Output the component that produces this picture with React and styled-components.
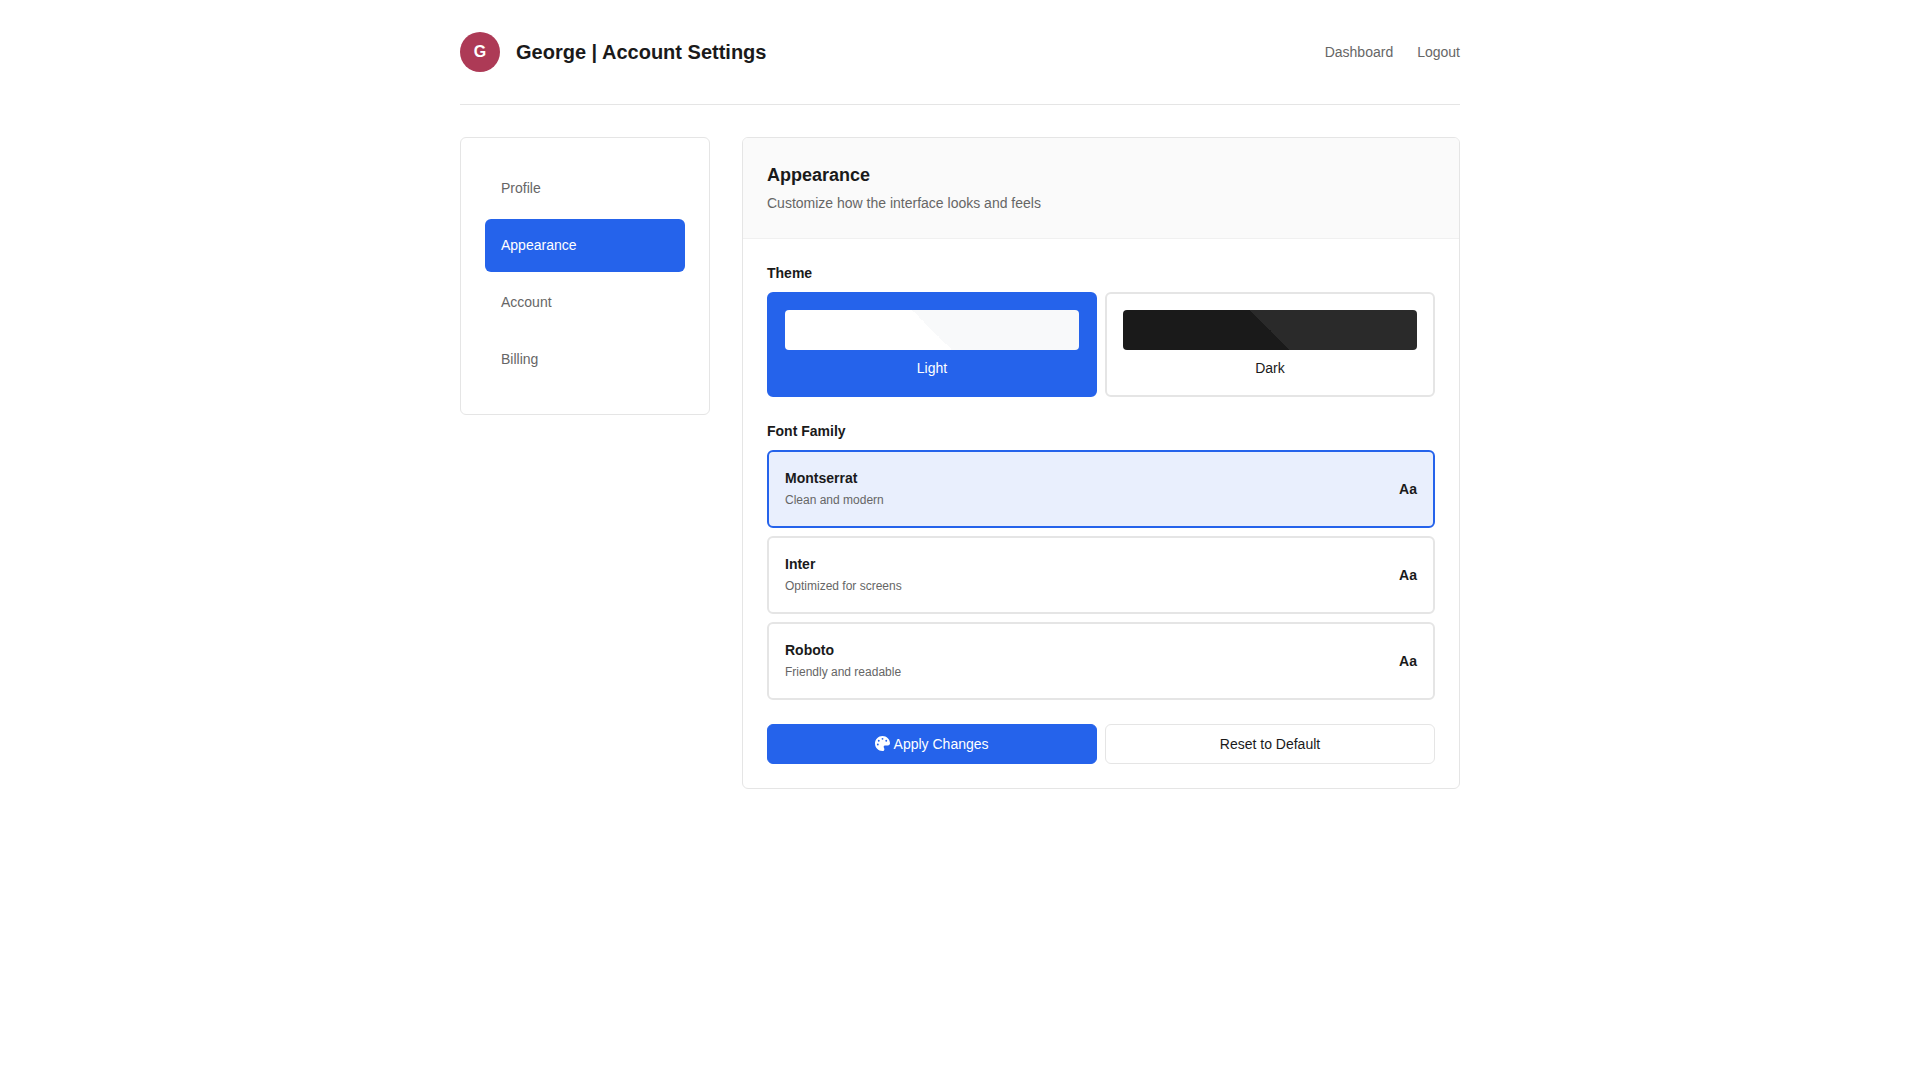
import React, { useState } from "react";
import styled, { createGlobalStyle, css } from "styled-components";
import { FaPalette } from "react-icons/fa6";

const GlobalStyle = createGlobalStyle`
  *, *::before, *::after { box-sizing: border-box; margin: 0; padding: 0; }
  body {
    background: #fff;
    color: #1a1a1a;
    font-family: "Liberation Sans", Arial, sans-serif;
    font-size: 14px;
    line-height: 1.5;
  }
`;

const Container = styled.div`
  width: 1001px;
  margin: 0 auto;
  padding: 32px 0 32px 1px;
`;

const Header = styled.header`
  display: flex;
  align-items: center;
  justify-content: space-between;
  padding-bottom: 32px;
  margin-bottom: 32px;
  border-bottom: 1px solid #e5e5e5;
`;

const Brand = styled.div`
  display: flex;
  align-items: center;
  gap: 16px;
`;

const Avatar = styled.div`
  display: flex;
  align-items: center;
  justify-content: center;
  width: 40px;
  height: 40px;
  border-radius: 50%;
  background: #ad3a56;
  color: #fff;
  font-size: 16px;
  font-weight: 600;
`;

const PageTitle = styled.h1`
  font-size: 20px;
  font-weight: 600;
`;

const TopNav = styled.nav`
  display: flex;
  gap: 24px;
`;

const TopLink = styled.a`
  color: #666;
  text-decoration: none;
  cursor: pointer;
`;

const Layout = styled.div`
  display: grid;
  grid-template-columns: 250px 1fr;
  gap: 32px;
  align-items: start;
`;

const Sidebar = styled.aside`
  padding: 24px;
  border: 1px solid #e5e5e5;
  border-radius: 6px;
`;

const SideList = styled.ul`
  list-style: none;
`;

const SideItem = styled.li`
  margin-bottom: 4px;
`;

const SideLink = styled.a`
  display: block;
  padding: 16px;
  border-radius: 6px;
  cursor: pointer;
  color: ${(p) => (p.$active ? "#fff" : "#666")};
  background: ${(p) => (p.$active ? "#2563eb" : "transparent")};
`;

const Panel = styled.main`
  border: 1px solid #e5e5e5;
  border-radius: 6px;
  overflow: hidden;
`;

const PanelHeader = styled.div`
  padding: 24px;
  background: #fafafa;
  border-bottom: 1px solid #f0f0f0;
`;

const PanelTitle = styled.h2`
  margin-bottom: 4px;
  font-size: 18px;
  font-weight: 600;
`;

const PanelText = styled.p`
  color: #666;
`;

const PanelBody = styled.div`
  padding: 24px;
`;

const Section = styled.section`
  margin-bottom: 24px;
`;

const Label = styled.h3`
  margin-bottom: 8px;
  font-size: 14px;
  font-weight: 600;
`;

const TwoColumns = styled.div`
  display: grid;
  grid-template-columns: 1fr 1fr;
  gap: 8px;
`;

const optionFrame = css`
  padding: 16px;
  border: 2px solid ${(p) => (p.$active ? "#2563eb" : "#e5e5e5")};
  border-radius: 6px;
  cursor: pointer;
`;

const ThemeCard = styled.div`
  ${optionFrame}
  text-align: center;
  color: ${(p) => (p.$active ? "#fff" : "#1a1a1a")};
  background: ${(p) => (p.$active ? "#2563eb" : "transparent")};
`;

const Swatch = styled.div`
  height: 40px;
  margin-bottom: 8px;
  border-radius: 4px;
  background: linear-gradient(45deg, ${(p) => p.$from} 50%, ${(p) => p.$to} 50%);
`;

const FontList = styled.div`
  display: grid;
  gap: 8px;
`;

const FontCard = styled.div`
  ${optionFrame}
  display: flex;
  align-items: center;
  justify-content: space-between;
  height: 78px;
  background: ${(p) => (p.$active ? "#e9effd" : "transparent")};
`;

const FontName = styled.div`
  margin-bottom: 2px;
  font-weight: 600;
`;

const FontNote = styled.div`
  padding-bottom: 1px;
  color: #666;
  font-size: 12px;
`;

const Sample = styled.span`
  font-weight: 600;
`;

const Button = styled.button`
  height: 40px;
  border: 1px solid ${(p) => (p.$primary ? "#2563eb" : "#e5e5e5")};
  border-radius: 6px;
  background: ${(p) => (p.$primary ? "#2563eb" : "transparent")};
  color: ${(p) => (p.$primary ? "#fff" : "#1a1a1a")};
  font: inherit;
  cursor: pointer;
`;

const PaletteIcon = styled(FaPalette)`
  width: 15px;
  height: 15px;
  vertical-align: -2px;
`;

const tabs = ["Profile", "Appearance", "Account", "Billing"];

const themes = [
  { name: "Light", from: "#ffffff", to: "#f8f9fa" },
  { name: "Dark", from: "#1a1a1a", to: "#2a2a2a" },
];

const fonts = [
  { name: "Montserrat", note: "Clean and modern" },
  { name: "Inter", note: "Optimized for screens" },
  { name: "Roboto", note: "Friendly and readable" },
];

export default function App() {
  const [tab, setTab] = useState("Appearance");
  const [theme, setTheme] = useState("Light");
  const [font, setFont] = useState("Montserrat");

  const reset = () => {
    setTheme("Light");
    setFont("Montserrat");
  };

  return (
    <>
      <GlobalStyle />
      <Container>
        <Header>
          <Brand>
            <Avatar>G</Avatar>
            <PageTitle>George | Account Settings</PageTitle>
          </Brand>
          <TopNav>
            <TopLink>Dashboard</TopLink>
            <TopLink>Logout</TopLink>
          </TopNav>
        </Header>
        <Layout>
          <Sidebar>
            <SideList>
              {tabs.map((name) => (
                <SideItem key={name}>
                  <SideLink $active={tab === name} onClick={() => setTab(name)}>
                    {name}
                  </SideLink>
                </SideItem>
              ))}
            </SideList>
          </Sidebar>
          <Panel>
            <PanelHeader>
              <PanelTitle>Appearance</PanelTitle>
              <PanelText>Customize how the interface looks and feels</PanelText>
            </PanelHeader>
            <PanelBody>
              <Section>
                <Label>Theme</Label>
                <TwoColumns>
                  {themes.map((t) => (
                    <ThemeCard
                      key={t.name}
                      $active={theme === t.name}
                      onClick={() => setTheme(t.name)}
                    >
                      <Swatch $from={t.from} $to={t.to} />
                      {t.name}
                    </ThemeCard>
                  ))}
                </TwoColumns>
              </Section>
              <Section>
                <Label>Font Family</Label>
                <FontList>
                  {fonts.map((f) => (
                    <FontCard
                      key={f.name}
                      $active={font === f.name}
                      onClick={() => setFont(f.name)}
                    >
                      <div>
                        <FontName>{f.name}</FontName>
                        <FontNote>{f.note}</FontNote>
                      </div>
                      <Sample>Aa</Sample>
                    </FontCard>
                  ))}
                </FontList>
              </Section>
              <TwoColumns>
                <Button $primary>
                  <PaletteIcon /> Apply Changes
                </Button>
                <Button onClick={reset}>Reset to Default</Button>
              </TwoColumns>
            </PanelBody>
          </Panel>
        </Layout>
      </Container>
    </>
  );
}
